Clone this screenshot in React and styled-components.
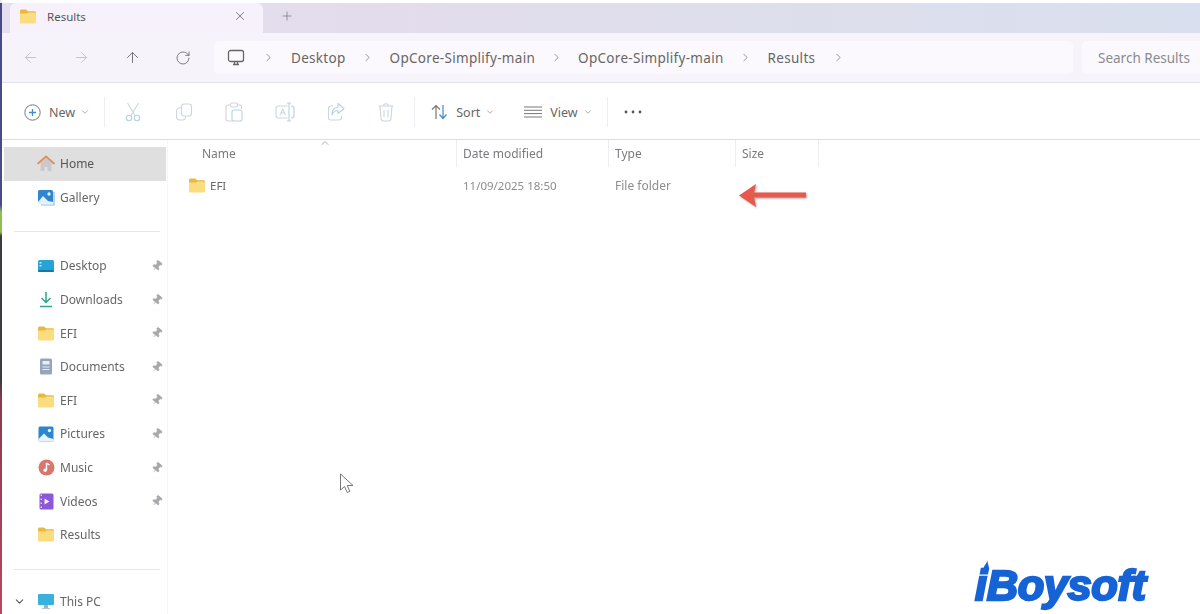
import React from "react";
import styled, { createGlobalStyle } from "styled-components";
import {
  ArrowLeft, ArrowRight, ArrowUp, RotateCw, X, Plus, ChevronRight, ChevronDown, ChevronUp, Pin,
} from "lucide-react";

const Global = createGlobalStyle`
  html, body { margin: 0; padding: 0; background: #fff; overflow: hidden; }
  body { font-family: "Noto Sans", "Open Sans", sans-serif; }
`;

const Page = styled.div`
  position: relative; width: 1200px; height: 614px; display: flex; overflow: hidden; background: #fff;
`;
const Edge = styled.div`
  width: 2px; flex: none;
  background: linear-gradient(180deg, #e9e6f0 0, #e9e6f0 3px, #4a4a86 3px, #4a4a86 205px, #8cc152 212px, #8cc152 232px, #3b3b40 236px, #3b3b40 380px, #8c3a50 400px, #b84860 614px);
`;
const Window = styled.div`
  flex: 1; min-width: 0; display: flex; flex-direction: column; filter: blur(0.45px);
`;
const TabStrip = styled.div`
  margin-top: 3px; height: 30px; flex: none; display: flex; align-items: stretch; padding-left: 8px;
  background: linear-gradient(90deg, #e6dfef 0, #e3dcec 30%, #dedeec 60%, #d9dfee 100%);
`;
const Tab = styled.div`
  width: 253px; display: flex; align-items: center; padding: 0 16px 4px 9px; gap: 10px; box-sizing: border-box;
  background: #f6f1fa; border-radius: 6px 6px 0 0; font-size: 11.5px; color: #555;
`;
const TabTitle = styled.span` flex: 1; `;
const NewTab = styled.div`
  width: 48px; display: flex; align-items: center; justify-content: center; color: #777; padding-bottom: 4px; box-sizing: border-box;
`;
const AddressBar = styled.div`
  height: 50px; flex: none; display: flex; align-items: center; background: #f7f3fb;
  border-bottom: 1px solid #e2e0ea; box-sizing: border-box; padding-left: 212px; position: relative;
`;
const NavIcons = styled.div`
  position: absolute; left: 0; top: 0; width: 212px; height: 100%; display: flex; align-items: center;
  padding-left: 20px; gap: 34px; box-sizing: border-box;
`;
const NavBtn = styled.span`
  display: flex; color: ${p => (p.$off ? "#bdbbc4" : "#6b6b6f")};
`;
const Crumbs = styled.div`
  width: 859px; height: 33px; display: flex; align-items: center; background: #fbf9fd; border-radius: 5px;
  padding-left: 13px; box-sizing: border-box; font-size: 13.5px; color: #666; letter-spacing: 0.3px;
`;
const CrumbText = styled.span` white-space: nowrap; `;
const Sep = styled.span`
  display: flex; width: ${p => p.$w || 44}px; justify-content: center; color: #777;
`;
const Search = styled.div`
  margin-left: 9px; flex: 1; height: 33px; display: flex; align-items: center; padding-left: 16px;
  background: #fbf9fd; border-radius: 5px 0 0 5px; font-size: 13.5px; color: #8a8a8f; white-space: nowrap; overflow: hidden;
`;
const Toolbar = styled.div`
  height: 57px; flex: none; display: flex; align-items: center; background: #fff; border-bottom: 1px solid #dcdce4;
  box-sizing: border-box; padding: 2px 0 0 22px; font-size: 12.5px; color: #666;
`;
const ToolBtn = styled.div`
  display: flex; align-items: center; gap: 8px; white-space: nowrap; margin-right: ${p => p.$mr || 0}px;
`;
const Caret = styled.span` display: flex; color: #a0a0a4; margin-left: -3px; `;
const Divider = styled.div`
  width: 1px; height: 30px; background: #eeeef2; margin: ${p => p.$m || "0 15px"};
`;
const GhostIcon = styled.span`
  display: flex; width: 22px; justify-content: center; margin-right: 28.6px;
`;
const Body = styled.div` flex: 1; min-height: 0; display: flex; `;
const Sidebar = styled.nav`
  width: 166px; flex: none; border-right: 1px solid #f5f5f7; padding: 7px 0 0 2px; box-sizing: border-box;
  font-size: 12px; color: #666; display: flex; flex-direction: column; overflow: hidden;
`;
const NavRow = styled.div`
  height: 33.6px; flex: none; display: flex; align-items: center; padding-left: 33px; gap: 5px; width: 162px;
  box-sizing: border-box; background: ${p => (p.$active ? "#dfdfdf" : "transparent")};
  color: ${p => (p.$active ? "#555" : "#666")}; position: relative;
`;
const NavIcon = styled.span` width: 18px; height: 18px; display: flex; align-items: center; justify-content: center; flex: none; `;
const NavLabel = styled.span` flex: 1; white-space: nowrap; `;
const PinMark = styled.span` display: flex; color: #a8a8ac; margin-right: 3px; transform: rotate(38deg); `;
const Expander = styled.span` position: absolute; left: 9px; top: 10px; display: flex; color: #555; `;
const SideRule = styled.div`
  height: 1px; background: #e6e6e8; margin: ${p => p.$m}; width: 146px; margin-left: 10px; flex: none;
`;
const Main = styled.main` flex: 1; min-width: 0; position: relative; `;
const Columns = styled.div`
  display: grid; grid-template-columns: 255px 152px 127px 83px; margin-left: 34px; width: fit-content;
`;
const HeadCell = styled.div`
  height: 27px; display: flex; align-items: center; font-size: 12px; color: #7a7a7e;
  padding-left: ${p => (p.$first ? 0 : 6)}px; border-right: 1px solid #eeeef2; box-sizing: border-box;
`;
const SortUp = styled.span` position: absolute; left: 151px; top: -3px; display: flex; color: #aaa; `;
const Cell = styled.div`
  height: 36px; display: flex; align-items: center; gap: 4px; font-size: ${p => p.$fs || 11.5}px; color: ${p => p.$c || "#8d8d90"};
  padding-left: ${p => (p.$first ? 0 : 6)}px; box-sizing: border-box; margin-left: ${p => (p.$first ? "-14px" : 0)};
`;
const Overlay = styled.div`
  position: absolute; left: ${p => p.$x}px; top: ${p => p.$y}px; line-height: 0;
`;
const Logo = styled.div`
  position: absolute; left: 975px; top: 562px; font-family: "Liberation Sans", Arial, sans-serif; font-weight: 700; font-style: italic;
  font-size: 42px; line-height: 48px; letter-spacing: -0.4px; color: #1663d6; -webkit-text-stroke: 2.3px #1663d6;
  transform-origin: left center; transform: scaleX(1.035);
`;

const Folder = ({ w = 18, h = 15 }) => (
  <svg width={w} height={h} viewBox="0 0 18 15">
    <path d="M1 2.2C1 1.2 1.6.6 2.6.6h4c.6 0 1 .2 1.4.6l1 1h6.4c1 0 1.6.6 1.6 1.6V6H1z" fill="#e9b93f" />
    <path d="M1 4.4h7.2L9.4 3.400h6c1 0 1.6.6 1.6 1.6v8c0 1-.6 1.6-1.6 1.6H2.6C1.6 14.600 1 14 1 13z" fill="#fbdc7e" />
  </svg>
);
const HomeIcon = () => (
  <svg width="18" height="17" viewBox="0 0 18 17">
    <path d="M3.500 8v8h4v-4h3v4h4V8L9 3z" fill="#c9c9cb" />
    <path d="M1 8.500 9 1.500l8 7" fill="none" stroke="#dd8f58" strokeWidth="1.700" strokeLinecap="round" strokeLinejoin="round" />
  </svg>
);
const GalleryIcon = () => (
  <svg width="18" height="17" viewBox="0 0 18 17">
    <rect x="1" y="1" width="15" height="14" rx="1.500" fill="#2f86cf" />
    <path d="M1 13l5-6 5 5 5 1v2H1z" fill="#e2f1fb" />
    <circle cx="12" cy="5" r="1.700" fill="#e2f1fb" />
    <path d="M17 3v13H4" fill="none" stroke="#8fbfe4" strokeWidth="1.200" />
  </svg>
);
const DesktopIcon = () => (
  <svg width="18" height="14" viewBox="0 0 18 14">
    <rect x="1" y="1" width="16" height="12" rx="1.500" fill="#27a3d6" />
    <rect x="1" y="11" width="16" height="2" rx="1" fill="#1579a8" />
    <rect x="2.500" y="3" width="2" height="1.500" fill="#c4ecf8" />
    <rect x="2.500" y="6" width="2" height="1.500" fill="#c4ecf8" />
  </svg>
);
const DownloadIcon = () => (
  <svg width="16" height="17" viewBox="0 0 16 17" fill="none" stroke="#2aa889" strokeWidth="1.500">
    <path d="M8 1v10M3.500 7 8 11.500 12.500 7" />
    <path d="M2 15.500h12" />
  </svg>
);
const DocIcon = () => (
  <svg width="14" height="17" viewBox="0 0 14 17">
    <rect x="1" y="0.500" width="12" height="16" rx="1.500" fill="#95a5bd" />
    <rect x="3.500" y="3" width="7" height="3.500" fill="#e7edf4" />
    <rect x="3.500" y="8.500" width="7" height="1" fill="#e7edf4" />
    <rect x="3.500" y="11" width="7" height="1" fill="#e7edf4" />
  </svg>
);
const PicturesIcon = () => (
  <svg width="16" height="16" viewBox="0 0 16 16">
    <rect x="0.500" y="0.500" width="15" height="15" rx="1.500" fill="#2a86cf" />
    <path d="M.5 13 6 7.500l4 4 5.500 1.500v2.500H.5z" fill="#e6f3fc" />
    <circle cx="11.500" cy="4.500" r="1.700" fill="#e6f3fc" />
  </svg>
);
const MusicIcon = () => (
  <svg width="17" height="17" viewBox="0 0 17 17">
    <circle cx="8.500" cy="8.500" r="8" fill="#d9776f" />
    <path d="M8.500 4v7" stroke="#fff" strokeWidth="1.400" />
    <path d="M8.500 4c1 1.200 2.400 1.400 3 2" stroke="#fff" strokeWidth="1.200" fill="none" />
    <circle cx="7.200" cy="11.300" r="1.700" fill="#fff" />
  </svg>
);
const VideoIcon = () => (
  <svg width="15" height="17" viewBox="0 0 15 17">
    <rect x="0.500" y="0.500" width="14" height="16" rx="1.500" fill="#8c58d8" />
    <path d="M5.500 5.500v6l5-3z" fill="#f3ecfd" />
    {[2, 6, 10, 14].map(y => <rect key={y} x="1.500" y={y - 0.5} width="1.500" height="1.500" fill="#dccdf6" />)}
  </svg>
);
const PcIcon = () => (
  <svg width="18" height="17" viewBox="0 0 18 17">
    <rect x="1" y="1" width="16" height="11" rx="1" fill="#38b2dc" />
    <rect x="7" y="12" width="4" height="3" fill="#9fb1bd" />
    <rect x="5" y="15" width="8" height="1" fill="#b6c3cc" />
  </svg>
);
const MonitorIcon = () => (
  <svg width="18" height="18" viewBox="0 0 18 18" fill="none" stroke="#666" strokeWidth="1.300">
    <rect x="1.500" y="1.500" width="15" height="11" rx="2" />
    <path d="M6 15.500h6M7.500 13v2M10.500 13v2" />
  </svg>
);
const NewIcon = () => (
  <svg width="17" height="17" viewBox="0 0 17 17">
    <circle cx="8.500" cy="8.500" r="7.700" fill="none" stroke="#777" strokeWidth="1" />
    <path d="M8.500 5v7M5 8.500h7" stroke="#3f8fd0" strokeWidth="1.300" />
  </svg>
);
const GHOST = "#cdd5de";
const GHOST_BLUE = "#b4d2e8";
const CutIcon = () => (
  <svg width="18" height="20" viewBox="0 0 18 20" fill="none" strokeWidth="1.100">
    <path d="M3.500 1 11 13.500M14.500 1 7 13.500" stroke={GHOST} />
    <circle cx="5" cy="16" r="2.700" stroke={GHOST_BLUE} />
    <circle cx="13" cy="16" r="2.700" stroke={GHOST_BLUE} />
  </svg>
);
const CopyIcon = () => (
  <svg width="18" height="20" viewBox="0 0 18 20" fill="none" strokeWidth="1.100" stroke={GHOST}>
    <rect x="6.500" y="2" width="10" height="12" rx="2.500" />
    <path d="M6.500 5.500C3 5.500 1.500 7 1.500 9.500v5c0 2.500 1.500 3.500 3.500 3.500h2.500c2 0 3-1 3.200-3.500" />
  </svg>
);
const PasteIcon = () => (
  <svg width="18" height="20" viewBox="0 0 18 20" fill="none" strokeWidth="1.100">
    <path d="M6 3H3.500C2 3 1 4 1 5.500v11C1 18 2 19 3.500 19H7M13 3h1.500c1.200 0 2 .8 2 2v2" stroke={GHOST} />
    <rect x="5.500" y="1" width="7" height="4" rx="1.500" stroke={GHOST} />
    <rect x="7" y="8" width="10" height="11" rx="2" stroke={GHOST_BLUE} />
  </svg>
);
const RenameIcon = () => (
  <svg width="20" height="20" viewBox="0 0 20 20" fill="none" strokeWidth="1.100">
    <path d="M12.500 4H3.500C2 4 1 5 1 6.500v7C1 15 2 16 3.500 16h9" stroke={GHOST} />
    <path d="M16 4h.5C18 4 19 5 19 6.500v7c0 1.500-1 2.500-2.500 2.500H16M14 1v18M12 1h4M12 19h4" stroke={GHOST_BLUE} />
    <path d="M5 13 7.800 7l2.700 6M6 11h3.700" stroke={GHOST} />
  </svg>
);
const ShareIcon = () => (
  <svg width="18" height="20" viewBox="0 0 18 20" fill="none" strokeWidth="1.100">
    <path d="M6 4H4C2.500 4 1.500 5 1.500 6.500v9C1.500 17 2.500 18 4 18h8c1.500 0 2.500-1 2.500-2.500V14" stroke={GHOST} />
    <path d="M11 1.500 17 6.500 11 11.500V8.500C8 8.500 6 10 5 13c0-4.500 2-7.500 6-7.800z" stroke={GHOST_BLUE} strokeLinejoin="round" />
  </svg>
);
const TrashIcon = () => (
  <svg width="18" height="20" viewBox="0 0 18 20" fill="none" strokeWidth="1.100" stroke={GHOST}>
    <path d="M1.500 4h15M6.500 4c0-3 5-3 5 0M3 4l1 12.500C4.100 18 5 19 6.500 19h5c1.500 0 2.400-1 2.500-2.500L15 4M7 8v7M11 8v7" />
  </svg>
);
const SortIcon = () => (
  <svg width="17" height="16" viewBox="0 0 17 16" fill="none" strokeWidth="1.200">
    <path d="M5 15V1.500M1 5.500 5 1.500l4 4" stroke="#777" />
    <path d="M12 1v13.500M8.500 10.500l3.500 4 3.500-4" stroke="#3f8fd0" />
  </svg>
);
const ViewIcon = () => (
  <svg width="18" height="12" viewBox="0 0 18 12" stroke="#777" strokeWidth="1">
    <path d="M0 1h18M0 4.300h18M0 7.600h18M0 11h18" />
  </svg>
);
const Dots = () => (
  <svg width="18" height="4" viewBox="0 0 18 4" fill="#555">
    <circle cx="2" cy="2" r="1.400" /><circle cx="9" cy="2" r="1.400" /><circle cx="16" cy="2" r="1.400" />
  </svg>
);

const groupTwo = [
  { label: "Desktop", icon: <DesktopIcon />, pin: true },
  { label: "Downloads", icon: <DownloadIcon />, pin: true },
  { label: "EFI", icon: <Folder />, pin: true },
  { label: "Documents", icon: <DocIcon />, pin: true },
  { label: "EFI", icon: <Folder />, pin: true },
  { label: "Pictures", icon: <PicturesIcon />, pin: true },
  { label: "Music", icon: <MusicIcon />, pin: true },
  { label: "Videos", icon: <VideoIcon />, pin: true },
  { label: "Results", icon: <Folder /> },
];
const ghosts = [CutIcon, CopyIcon, PasteIcon, RenameIcon, ShareIcon, TrashIcon];

export default function App() {
  return (
    <Page>
      <Global />
      <Edge />
      <Window>
        <TabStrip>
          <Tab>
            <Folder />
            <TabTitle>Results</TabTitle>
            <X size={14} strokeWidth={1.400} color="#666" />
          </Tab>
          <NewTab><Plus size={14} strokeWidth={1.200} /></NewTab>
        </TabStrip>
        <AddressBar>
          <NavIcons>
            <NavBtn $off><ArrowLeft size={17} strokeWidth={1.200} /></NavBtn>
            <NavBtn $off><ArrowRight size={17} strokeWidth={1.200} /></NavBtn>
            <NavBtn><ArrowUp size={17} strokeWidth={1.300} /></NavBtn>
            <NavBtn><RotateCw size={16} strokeWidth={1.300} /></NavBtn>
          </NavIcons>
          <Crumbs>
            <MonitorIcon />
            <Sep $w={46}><ChevronRight size={13} strokeWidth={1.400} /></Sep>
            <CrumbText>Desktop</CrumbText>
            <Sep $w={44}><ChevronRight size={13} strokeWidth={1.400} /></Sep>
            <CrumbText>OpCore-Simplify-main</CrumbText>
            <Sep $w={43}><ChevronRight size={13} strokeWidth={1.400} /></Sep>
            <CrumbText>OpCore-Simplify-main</CrumbText>
            <Sep $w={44}><ChevronRight size={13} strokeWidth={1.400} /></Sep>
            <CrumbText>Results</CrumbText>
            <Sep $w={46}><ChevronRight size={13} strokeWidth={1.400} /></Sep>
          </Crumbs>
          <Search>Search Results</Search>
        </AddressBar>
        <Toolbar>
          <ToolBtn>
            <NewIcon />
            <span>New</span>
            <Caret><ChevronDown size={10} /></Caret>
          </ToolBtn>
          <Divider $m="0 17px 0 14px" />
          {ghosts.map((G, i) => (
            <GhostIcon key={i}><G /></GhostIcon>
          ))}
          <Divider $m="0 16px 0 -11.5px" />
          <ToolBtn $mr={29}>
            <SortIcon />
            <span>Sort</span>
            <Caret><ChevronDown size={10} /></Caret>
          </ToolBtn>
          <ToolBtn>
            <ViewIcon />
            <span>View</span>
            <Caret><ChevronDown size={10} /></Caret>
          </ToolBtn>
          <Divider $m="0 16px 0 14px" />
          <Dots />
        </Toolbar>
        <Body>
          <Sidebar>
            <NavRow $active><NavIcon><HomeIcon /></NavIcon><NavLabel>Home</NavLabel></NavRow>
            <NavRow><NavIcon><GalleryIcon /></NavIcon><NavLabel>Gallery</NavLabel></NavRow>
            <SideRule $m="17px 0 17px" />
            {groupTwo.map((r, i) => (
              <NavRow key={i}>
                <NavIcon>{r.icon}</NavIcon>
                <NavLabel>{r.label}</NavLabel>
                {r.pin && <PinMark><Pin size={12} fill="currentColor" strokeWidth={1.200} /></PinMark>}
              </NavRow>
            ))}
            <SideRule $m="17px 0 15px" />
            <NavRow>
              <Expander><ChevronDown size={13} strokeWidth={2} /></Expander>
              <NavIcon><PcIcon /></NavIcon>
              <NavLabel>This PC</NavLabel>
            </NavRow>
          </Sidebar>
          <Main>
            <SortUp><ChevronUp size={12} /></SortUp>
            <Columns>
              <HeadCell $first>Name</HeadCell>
              <HeadCell>Date modified</HeadCell>
              <HeadCell>Type</HeadCell>
              <HeadCell>Size</HeadCell>
              <Cell $first $c="#666" $fs={11.5}><Folder />EFI</Cell>
              <Cell>11/09/2025 18:50</Cell>
              <Cell $fs={12}>File folder</Cell>
              <Cell />
            </Columns>
          </Main>
        </Body>
      </Window>
      <Overlay $x={736} $y={183} style={{ filter: "drop-shadow(1px 1.500px 1px rgba(0,0,0,.35))" }}>
        <svg width="72" height="26" viewBox="0 0 72 26">
          <path d="M3 12.500 20 1 18 9.500H70V14.500H18L20 24z" fill="#e8584c" />
        </svg>
      </Overlay>
      <Overlay $x={339} $y={473}>
        <svg width="16" height="22" viewBox="0 0 16 22">
          <path d="M1.500 1v16l4-3.500 2.800 6 2.600-1.200-2.700-5.800H14z" fill="#fff" stroke="#777" strokeWidth="1" strokeLinejoin="round" />
        </svg>
      </Overlay>
      <Overlay $x={982} $y={560}>
        <svg width="8" height="13" viewBox="0 0 8 13"><path d="M5.500 0C5 4 1 6 1.500 9.500 2 12.500 6 12.500 6.800 9.500 7.500 6.500 5.500 4 5.500 0z" fill="#1663d6" /></svg>
      </Overlay>
      <Logo>iBoysoft</Logo>
    </Page>
  );
}
